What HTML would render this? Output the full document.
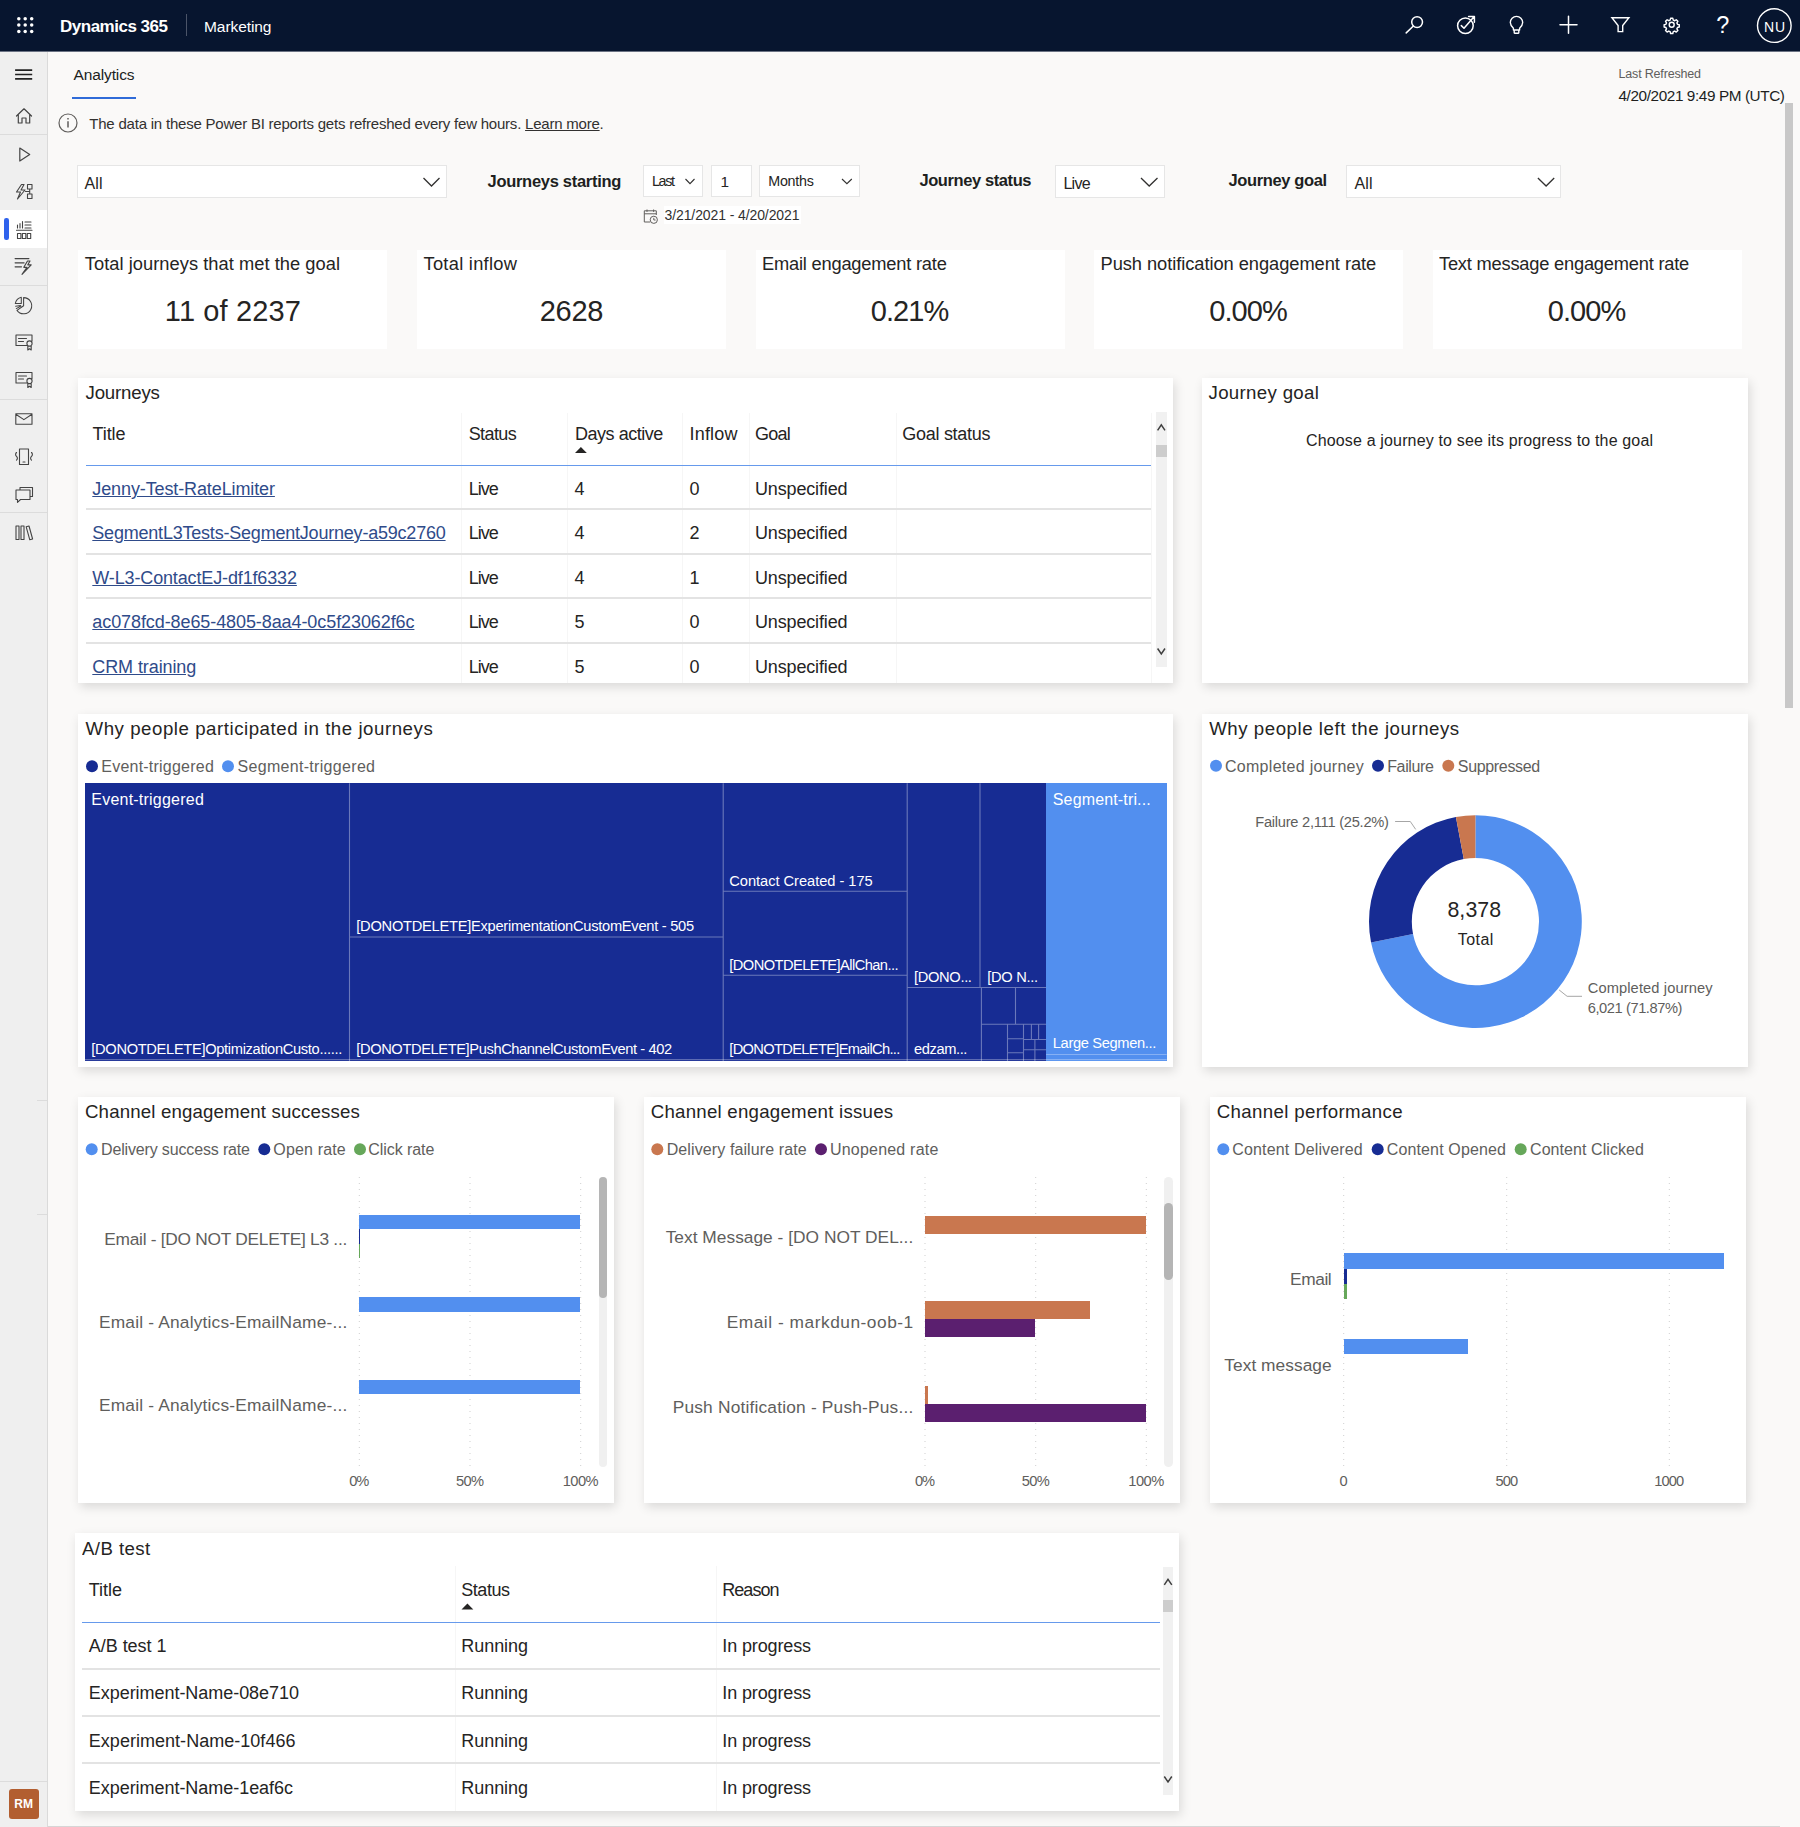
<!DOCTYPE html>
<html lang="en"><head><meta charset="utf-8"><title>Analytics - Dynamics 365 Marketing</title>
<style>
html,body{margin:0;padding:0}
body{width:1800px;height:1827px;position:relative;overflow:hidden;background:#faf9f8;font-family:"Liberation Sans",sans-serif;color:#252423}
.t{position:absolute;white-space:nowrap;line-height:1;margin:0;padding:0;opacity:.999}
.r{position:absolute}
.panel{background:#fff;box-shadow:2px 4px 10px rgba(0,0,0,.13)}
.card{background:#fff}
.box{background:#fff;border:1px solid #e6e6e6;box-sizing:border-box}
svg{position:absolute;left:0;top:0;overflow:visible}
a.t{text-decoration:underline}
section{display:block;margin:0;padding:0}

</style></head>
<body>
<section aria-label="top navigation bar">
<div class="r" style="left:0.0px;top:0.0px;width:1800.0px;height:51.0px;background:#07152f;"></div>
<div class="r" style="left:0.0px;top:51.0px;width:1800.0px;height:1.0px;background:#6b7384;"></div>
<svg width="1800" height="51" fill="#fff"><circle cx="18.8" cy="18.7" r="1.75"/><circle cx="18.8" cy="25.0" r="1.75"/><circle cx="18.8" cy="31.4" r="1.75"/><circle cx="25.2" cy="18.7" r="1.75"/><circle cx="25.2" cy="25.0" r="1.75"/><circle cx="25.2" cy="31.4" r="1.75"/><circle cx="31.7" cy="18.7" r="1.75"/><circle cx="31.7" cy="25.0" r="1.75"/><circle cx="31.7" cy="31.4" r="1.75"/></svg>
<div class="t" style="left:60.0px;top:18px;font-size:17px;letter-spacing:-0.492px;color:#fff;font-weight:700;">Dynamics 365</div>
<div class="r" style="left:185.5px;top:14.0px;width:1.0px;height:22.0px;background:#4b5468;"></div>
<div class="t" style="left:204.0px;top:19px;font-size:15.5px;letter-spacing:-0.070px;color:#fff;">Marketing</div>
<svg width="1800" height="51" fill="none" stroke="#fff" stroke-width="1.5" stroke-linecap="round" stroke-linejoin="round">
<g><circle cx="1417.1" cy="22.1" r="5.4"/><path d="M1413.4 26 L1406.2 32.9"/></g>
<g><circle cx="1465.4" cy="25.8" r="7.8"/><path d="M1461.300 25.6 l2.700 2.700 l10 -11.600 M1468.600 16.400 h5.800 v5.800" /></g>
<g><path d="M1513.4 30 v-1.8 c-2 -1.9 -3.1 -3.6 -3.1 -5.6 a6.2 6.2 0 0 1 12.4 0 c0 2 -1.1 3.7 -3.1 5.6 v1.800 z M1514.2 30 v2.400 a.8 .8 0 0 0 .8 .8 h3 a.8 .8 0 0 0 .8 -.8 v-2.400" stroke-width="1.4"/></g>
<g><path d="M1568.5 16.3 v17 M1560 24.8 h17"/></g>
<g><path d="M1611.900 17.700 h17 l-6.200 7.800 v6.100 h-4.600 v-6.100 z" stroke-width="1.4" stroke-linejoin="miter"/></g>
<g transform="translate(1671.7 24.7) scale(.75) translate(-1671.7 -25)" stroke-width="1.9"><circle cx="1671.7" cy="25" r="3.3"/><path d="M1670.2 16.5 h3 l.6 2.4 l1.9 .8 l2.1 -1.3 l2.1 2.1 l-1.3 2.1 l.8 1.9 l2.4 .6 v3 l-2.4 .6 l-.8 1.9 l1.3 2.1 l-2.1 2.1 l-2.1 -1.3 l-1.9 .8 l-.6 2.4 h-3 l-.6 -2.4 l-1.9 -.8 l-2.1 1.3 l-2.1 -2.1 l1.3 -2.1 l-.8 -1.9 l-2.4 -.6 v-3 l2.4 -.6 l.8 -1.9 l-1.3 -2.1 l2.1 -2.1 l2.1 1.3 l1.9 -.8 z"/></g>
<g><circle cx="1774.3" cy="25.6" r="16.8" stroke-width="1.4"/></g>
</svg>
<div class="t" style="left:1716.3px;top:14px;font-size:23.5px;color:#fff;">?</div>
<div class="t" style="left:1764.0px;top:20px;font-size:14px;letter-spacing:0.779px;color:#fff;">NU</div>
</section>
<section aria-label="left rail">
<div class="r" style="left:0.0px;top:52.0px;width:48.0px;height:1775.0px;background:#efefef;border-right:1px solid #dadada;box-sizing:border-box;"></div>
<div class="r" style="left:0.0px;top:210.0px;width:47.0px;height:38.0px;background:#fff;"></div>
<div class="r" style="left:4.3px;top:217.8px;width:4.5px;height:22.0px;background:#2f62ec;border-radius:2.2px;"></div>
<div class="r" style="left:0.0px;top:134.0px;width:47.0px;height:1.0px;background:#dcdcdc;"></div>
<div class="r" style="left:0.0px;top:285.0px;width:47.0px;height:1.0px;background:#dcdcdc;"></div>
<div class="r" style="left:0.0px;top:399.0px;width:47.0px;height:1.0px;background:#dcdcdc;"></div>
<div class="r" style="left:0.0px;top:512.0px;width:47.0px;height:1.0px;background:#dcdcdc;"></div>
<div class="r" style="left:36.5px;top:1100.0px;width:10.5px;height:1.0px;background:#dcdcdc;"></div>
<div class="r" style="left:36.5px;top:1214.0px;width:10.5px;height:1.0px;background:#dcdcdc;"></div>
<div class="r" style="left:0.0px;top:1781.0px;width:47.0px;height:1.0px;background:#dcdcdc;"></div>
<div class="r" style="left:8.9px;top:1789.3px;width:29.8px;height:29.7px;background:#b25e30;border-radius:3px;"></div>
<div class="t" style="left:14.3px;top:1798px;font-size:12px;letter-spacing:0.137px;color:#fff;font-weight:700;">RM</div>
<svg width="48" height="1827" fill="none" stroke="#444" stroke-width="1.2" stroke-linejoin="round" stroke-linecap="round">
<path d="M15.1 70.2 h17.1 M15.1 74.5 h17.1 M15.1 78.9 h17.1" stroke-width="1.7" stroke-linecap="butt" stroke="#222"/>
<path d="M16.5 116 L24 108.8 L31.5 116 M18.3 114.5 V123 H22 V118 H26 V123 H29.7 V114.5"/>
<path d="M19.8 148 L29.7 154.5 L19.8 161 Z"/>
<path d="M21.5 184.5 L16.5 192 H20.5 L17.5 199 L25 190 H21 L24 184.5 Z M27.5 184.5 h4.5 v4.5 h-4.5 z M27.5 194 h4.5 v4.5 h-4.5 z M29.7 189 v5 M25.5 191.5 h4.2" stroke-width="1.1"/>
<path d="M17.5 233.5 h3.4 v5 h-3.4 z M22.4 233.5 h3.4 v5 h-3.4 z M27.3 233.5 h3.4 v5 h-3.4 z M16.5 230.3 h15.5 M17.5 228 v-3 M20 228 v-4.5 M22.5 228 v-6.5 M25 222 h6 M25 225 h6 M25 228 h6" stroke-width="1.1"/>
<path d="M15.1 258.6 h13.8 M15.1 262.8 h9 M15.1 266.8 h6.4 M27.5 261 L23.8 267.3 H27 L22 274.3 L31.2 264.8 H27.8 L30 261 Z" stroke-width="1.15"/>
<path d="M23.6 297.6 a8.1 8.1 0 1 1 -6.6 12.8 L23.6 305.7 Z M21.3 297.3 v6.2 h-6 a8.1 8.1 0 0 1 6 -6.2 z M15.6 306.2 l5 -.6 M16.3 308.6 l4.6 -2.6" stroke-width="1.05"/>
<path d="M28 345.5 H16 V335 H32 V341 M18.5 338.5 h8 M18.5 341.5 h5 M29.5 343.5 m-2.6 0 a2.6 2.6 0 1 0 5.2 0 a2.6 2.6 0 1 0 -5.2 0 M27.8 346 v4 l1.7 -1.2 l1.7 1.2 v-4" stroke-width="1.1"/>
<path d="M28 383 H16 V372.5 H32 V378.5 M18.5 376 h8 M18.5 379 h5 M29.5 381 m-2.6 0 a2.6 2.6 0 1 0 5.2 0 a2.6 2.6 0 1 0 -5.2 0 M27.8 383.5 v4 l1.7 -1.2 l1.7 1.2 v-4" stroke-width="1.1"/>
<path d="M15.8 413.8 H32 V424.3 H15.8 Z M15.8 414.3 L23.9 419.6 L32 414.3" stroke-width="1.1"/>
<path d="M19.5 449 h9 v15.5 h-9 z M23 462 h2 M16.5 452.5 c-1.2 1.2 -1.2 2.6 0 3.8 c1.2 1.2 1.2 2.6 0 3.8 M31.5 452.5 c1.2 1.2 1.2 2.6 0 3.8 c-1.2 1.2 -1.2 2.6 0 3.8" stroke-width="1.1"/>
<path d="M20 490 v-2.5 h12.5 v9 h-2.5 M16 490 h14 v9.5 h-9.5 l-3 2.8 v-2.8 h-1.5 z" stroke-width="1.1"/>
<path d="M16 526 h3 v13.5 h-3 z M21 526 h3 v13.5 h-3 z M26.2 526.8 l2.8 -.8 l3.6 13 l-2.8 .8 z" stroke-width="1.1"/>
</svg>
</section>
<section aria-label="page heading">
<div class="t" style="left:73.5px;top:67px;font-size:15.5px;letter-spacing:-0.128px;color:#201f1e;">Analytics</div>
<div class="r" style="left:72.0px;top:96.7px;width:64.3px;height:2.2px;background:#2f6bd8;"></div>
<svg width="100" height="140" fill="none" stroke="#605e5c" stroke-width="1.2"><circle cx="68" cy="123" r="9"/><path d="M68 121.3 v6.2 M68 118 v1.4" stroke-width="1.5"/></svg>
<div class="t" style="left:89.3px;top:116px;font-size:15px;letter-spacing:-0.216px;color:#323130">The data in these Power BI reports gets refreshed every few hours. <span style="text-decoration:underline">Learn more</span>.</div>
<div class="t" style="left:1618.5px;top:68px;font-size:12.5px;letter-spacing:-0.175px;color:#605e5c;">Last Refreshed</div>
<div class="t" style="left:1618.5px;top:88px;font-size:15.3px;letter-spacing:-0.395px;color:#201f1e;">4/20/2021 9:49 PM (UTC)</div>
<div class="r" style="left:1784.5px;top:103.0px;width:8.0px;height:605.0px;background:#c8c8c8;"></div>
<div class="r" style="left:48.0px;top:1825.5px;width:1732.0px;height:1.0px;background:#d6d6d6;"></div>
</section>
<section aria-label="filter bar">
<div class="r box" style="left:77.0px;top:165.0px;width:370.0px;height:33.0px;"></div>
<div class="t" style="left:84.5px;top:176px;font-size:16px;letter-spacing:0.109px;">All</div>
<svg width="1800" height="260" fill="none" stroke="#323130" stroke-width="1.3"><path d="M423.5 178.0 L431.5 186.0 L439.5 178.0"/></svg>
<div class="t" style="left:487.5px;top:173px;font-size:16.5px;letter-spacing:-0.291px;color:#201f1e;font-weight:700;">Journeys starting</div>
<div class="r box" style="left:643.0px;top:165.0px;width:60.0px;height:32.0px;"></div>
<div class="t" style="left:652.0px;top:174px;font-size:14.3px;letter-spacing:-1.343px;">Last</div>
<svg width="1800" height="260" fill="none" stroke="#323130" stroke-width="1.1"><path d="M685.5 179.0 L690.0 183.7 L694.5 179.0"/></svg>
<div class="r box" style="left:711.0px;top:165.0px;width:41.0px;height:32.0px;"></div>
<div class="t" style="left:720.5px;top:174px;font-size:15.3px;">1</div>
<div class="r box" style="left:759.0px;top:165.0px;width:101.0px;height:32.0px;"></div>
<div class="t" style="left:768.3px;top:174px;font-size:14.3px;letter-spacing:-0.279px;">Months</div>
<svg width="1800" height="260" fill="none" stroke="#323130" stroke-width="1.1"><path d="M842.0 179.0 L846.9 183.7 L851.8 179.0"/></svg>
<div class="r" style="left:663.8px;top:205.5px;width:137.5px;height:18.5px;background:#fff;"></div>
<svg width="1800" height="260" fill="none" stroke="#605e5c" stroke-width="1"><path d="M650 222 H644.3 V210.8 H656.3 V215 M644.3 213.8 H656.3 M647 209.5 v2.4 M653.6 209.5 v2.4"/><circle cx="653.8" cy="219.8" r="3.6" fill="#faf9f8"/><path d="M653.8 217.8 v2.2 h1.8"/></svg>
<div class="t" style="left:664.5px;top:208px;font-size:14px;letter-spacing:-0.100px;color:#323130;">3/21/2021 - 4/20/2021</div>
<div class="t" style="left:919.4px;top:172px;font-size:16.5px;letter-spacing:-0.406px;color:#201f1e;font-weight:700;">Journey status</div>
<div class="r box" style="left:1055.0px;top:165.0px;width:110.0px;height:33.0px;"></div>
<div class="t" style="left:1063.4px;top:176px;font-size:16px;letter-spacing:-0.718px;">Live</div>
<svg width="1800" height="260" fill="none" stroke="#323130" stroke-width="1.3"><path d="M1141.0 178.0 L1149.2 186.0 L1157.5 178.0"/></svg>
<div class="t" style="left:1228.5px;top:172px;font-size:16.5px;letter-spacing:-0.363px;color:#201f1e;font-weight:700;">Journey goal</div>
<div class="r box" style="left:1346.0px;top:165.0px;width:215.0px;height:33.0px;"></div>
<div class="t" style="left:1354.5px;top:176px;font-size:16px;letter-spacing:0.109px;">All</div>
<svg width="1800" height="260" fill="none" stroke="#323130" stroke-width="1.3"><path d="M1537.9 178.0 L1546.1 186.0 L1554.2 178.0"/></svg>
</section>
<section aria-label="KPI cards">
<div class="r card" style="left:78.3px;top:250.0px;width:309.0px;height:98.7px;"></div>
<div class="t" style="left:84.8px;top:255px;font-size:18.3px;letter-spacing:0.038px;">Total journeys that met the goal</div>
<div class="t" style="left:164.8px;top:297px;font-size:29px;letter-spacing:0.120px;">11 of 2237</div>
<div class="r card" style="left:417.0px;top:250.0px;width:309.0px;height:98.7px;"></div>
<div class="t" style="left:423.5px;top:255px;font-size:18.3px;letter-spacing:0.270px;">Total inflow</div>
<div class="t" style="left:539.8px;top:297px;font-size:29px;letter-spacing:-0.339px;">2628</div>
<div class="r card" style="left:755.5px;top:250.0px;width:309.0px;height:98.7px;"></div>
<div class="t" style="left:762.0px;top:255px;font-size:18.3px;letter-spacing:-0.211px;">Email engagement rate</div>
<div class="t" style="left:870.8px;top:297px;font-size:29px;letter-spacing:-0.932px;">0.21%</div>
<div class="r card" style="left:1094.0px;top:250.0px;width:309.0px;height:98.7px;"></div>
<div class="t" style="left:1100.5px;top:255px;font-size:18.3px;letter-spacing:-0.054px;">Push notification engagement rate</div>
<div class="t" style="left:1209.2px;top:297px;font-size:29px;letter-spacing:-0.932px;">0.00%</div>
<div class="r card" style="left:1432.5px;top:250.0px;width:309.0px;height:98.7px;"></div>
<div class="t" style="left:1439.0px;top:255px;font-size:18.3px;letter-spacing:-0.217px;">Text message engagement rate</div>
<div class="t" style="left:1547.8px;top:297px;font-size:29px;letter-spacing:-0.932px;">0.00%</div>
</section>
<section aria-label="Journeys table">
<div class="r panel" style="left:78.3px;top:378.3px;width:1094.4px;height:305.0px;"></div>
<div class="t" style="left:85.5px;top:384px;font-size:18.67px;letter-spacing:-0.180px;">Journeys</div>
<div class="r" style="left:460.8px;top:412.5px;width:1.0px;height:270.5px;background:#f6f6f6;"></div>
<div class="r" style="left:567.0px;top:412.5px;width:1.0px;height:270.5px;background:#f6f6f6;"></div>
<div class="r" style="left:682.0px;top:412.5px;width:1.0px;height:270.5px;background:#f6f6f6;"></div>
<div class="r" style="left:748.8px;top:412.5px;width:1.0px;height:270.5px;background:#f6f6f6;"></div>
<div class="r" style="left:896.3px;top:412.5px;width:1.0px;height:270.5px;background:#f6f6f6;"></div>
<div class="r" style="left:1150.5px;top:412.5px;width:1.0px;height:270.5px;background:#f6f6f6;"></div>
<div class="t" style="left:92.5px;top:425px;font-size:18px;letter-spacing:-0.084px;">Title</div>
<div class="t" style="left:468.7px;top:425px;font-size:18px;letter-spacing:-0.586px;">Status</div>
<div class="t" style="left:575.0px;top:425px;font-size:18px;letter-spacing:-0.473px;">Days active</div>
<div class="t" style="left:689.5px;top:425px;font-size:18px;letter-spacing:0.196px;">Inflow</div>
<div class="t" style="left:755.0px;top:425px;font-size:18px;letter-spacing:-0.741px;">Goal</div>
<div class="t" style="left:902.3px;top:425px;font-size:18px;letter-spacing:-0.285px;">Goal status</div>
<svg width="1800" height="1827"><path d="M575 453 L580.9 447 L586.8 453 Z" fill="#252423"/></svg>
<div class="r" style="left:85.8px;top:465.0px;width:1064.8px;height:1.3px;background:#669aec;"></div>
<a class="t" style="left:92.3px;top:480px;font-size:18px;letter-spacing:-0.113px;color:#2f4b8a;">Jenny-Test-RateLimiter</a>
<div class="t" style="left:468.7px;top:480px;font-size:18px;letter-spacing:-0.974px;">Live</div>
<div class="t" style="left:574.5px;top:480px;font-size:18px;">4</div>
<div class="t" style="left:689.5px;top:480px;font-size:18px;">0</div>
<div class="t" style="left:755.0px;top:480px;font-size:18px;letter-spacing:-0.155px;">Unspecified</div>
<div class="r" style="left:85.8px;top:508.3px;width:1065.2px;height:2.0px;background:#e3e3e3;"></div>
<a class="t" style="left:92.3px;top:524px;font-size:18px;letter-spacing:-0.209px;color:#2f4b8a;">SegmentL3Tests-SegmentJourney-a59c2760</a>
<div class="t" style="left:468.7px;top:524px;font-size:18px;letter-spacing:-0.974px;">Live</div>
<div class="t" style="left:574.5px;top:524px;font-size:18px;">4</div>
<div class="t" style="left:689.5px;top:524px;font-size:18px;">2</div>
<div class="t" style="left:755.0px;top:524px;font-size:18px;letter-spacing:-0.155px;">Unspecified</div>
<div class="r" style="left:85.8px;top:552.8px;width:1065.2px;height:2.0px;background:#e3e3e3;"></div>
<a class="t" style="left:92.3px;top:569px;font-size:18px;letter-spacing:-0.140px;color:#2f4b8a;">W-L3-ContactEJ-df1f6332</a>
<div class="t" style="left:468.7px;top:569px;font-size:18px;letter-spacing:-0.974px;">Live</div>
<div class="t" style="left:574.5px;top:569px;font-size:18px;">4</div>
<div class="t" style="left:689.5px;top:569px;font-size:18px;">1</div>
<div class="t" style="left:755.0px;top:569px;font-size:18px;letter-spacing:-0.155px;">Unspecified</div>
<div class="r" style="left:85.8px;top:597.3px;width:1065.2px;height:2.0px;background:#e3e3e3;"></div>
<a class="t" style="left:92.3px;top:613px;font-size:18px;letter-spacing:-0.087px;color:#2f4b8a;">ac078fcd-8e65-4805-8aa4-0c5f23062f6c</a>
<div class="t" style="left:468.7px;top:613px;font-size:18px;letter-spacing:-0.974px;">Live</div>
<div class="t" style="left:574.5px;top:613px;font-size:18px;">5</div>
<div class="t" style="left:689.5px;top:613px;font-size:18px;">0</div>
<div class="t" style="left:755.0px;top:613px;font-size:18px;letter-spacing:-0.155px;">Unspecified</div>
<div class="r" style="left:85.8px;top:641.8px;width:1065.2px;height:2.0px;background:#e3e3e3;"></div>
<a class="t" style="left:92.3px;top:658px;font-size:18px;letter-spacing:-0.094px;color:#2f4b8a;">CRM training</a>
<div class="t" style="left:468.7px;top:658px;font-size:18px;letter-spacing:-0.974px;">Live</div>
<div class="t" style="left:574.5px;top:658px;font-size:18px;">5</div>
<div class="t" style="left:689.5px;top:658px;font-size:18px;">0</div>
<div class="t" style="left:755.0px;top:658px;font-size:18px;letter-spacing:-0.155px;">Unspecified</div>
<div class="r" style="left:1155.8px;top:412.0px;width:11.0px;height:255.0px;background:#f1f1f1;"></div>
<div class="r" style="left:1155.8px;top:445.3px;width:11.0px;height:12.2px;background:#cdcdcd;"></div>
<svg width="1800" height="1827" fill="none" stroke="#404040" stroke-width="1.5"><path d="M1157.6 430.4 L1161.3 424.9 L1165.0 430.4 M1157.6 648.5 L1161.3 654.0 L1165.0 648.5"/></svg>
</section>
<section aria-label="Journey goal">
<div class="r panel" style="left:1202.0px;top:378.3px;width:546.2px;height:305.0px;"></div>
<div class="t" style="left:1208.5px;top:384px;font-size:18.67px;letter-spacing:0.326px;">Journey goal</div>
<div class="t" style="left:1306.0px;top:433px;font-size:16px;letter-spacing:0.154px;">Choose a journey to see its progress to the goal</div>
</section>
<section aria-label="Why people participated (treemap)">
<div class="r panel" style="left:78.3px;top:714.2px;width:1094.4px;height:353.1px;"></div>
<div class="t" style="left:85.5px;top:720px;font-size:18.67px;letter-spacing:0.541px;">Why people participated in the journeys</div>
<div class="t" style="left:101.3px;top:759px;font-size:16px;letter-spacing:0.222px;color:#605e5c;">Event-triggered</div>
<div class="t" style="left:237.5px;top:759px;font-size:16px;letter-spacing:0.311px;color:#605e5c;">Segment-triggered</div>
<svg width="1800" height="1827"><circle cx="92.0" cy="766.2" r="6" fill="#172c93"/><circle cx="228.0" cy="766.2" r="6" fill="#528fef"/></svg>
<div class="r" style="left:84.5px;top:783.3px;width:961.6px;height:277.7px;background:#172c93;"></div>
<div class="r" style="left:1046.1px;top:783.3px;width:120.6px;height:277.7px;background:#528fef;"></div>
<svg width="1800" height="1827" fill="none" stroke="rgba(255,255,255,.36)" stroke-width="1.1"><path d="M349.5 783.3 V1061.0 M723.2 783.3 V1061.0 M907.2 783.3 V1061.0 M980.0 783.3 V987.5 M981.4 987.5 V1061.0 M349.5 937.0 H723.2 M723.2 891.3 H907.2 M723.2 975.3 H907.2 M907.2 987.5 H1046.1 M1015.5 987.5 V1024.3 M981.4 1024.3 H1046.1 M1007.5 1024.3 V1061.0 M1023.5 1024.3 V1061.0 M1007.5 1038.8 H1023.5 M1023.5 1039.5 H1046.1 M1031.4 1024.3 V1039.5 M1038.6 1024.3 V1039.5 M1007.5 1052.8 H1023.5 M1034.9 1039.5 V1061.0 M1023.5 1049.8 H1046.1"/><path d="M1046.1 1054.5 H1166.7 M84.5 1059.6 H1166.7" stroke="rgba(255,255,255,.3)"/></svg>
<div class="t" style="left:91.3px;top:792px;font-size:16px;letter-spacing:0.222px;color:#fff;">Event-triggered</div>
<div class="t" style="left:91.3px;top:1042px;font-size:14.67px;letter-spacing:-0.323px;color:#fff;">[DONOTDELETE]OptimizationCusto......</div>
<div class="t" style="left:356.3px;top:919px;font-size:14.67px;letter-spacing:-0.263px;color:#fff;">[DONOTDELETE]ExperimentationCustomEvent - 505</div>
<div class="t" style="left:356.3px;top:1042px;font-size:14.67px;letter-spacing:-0.391px;color:#fff;">[DONOTDELETE]PushChannelCustomEvent - 402</div>
<div class="t" style="left:729.3px;top:874px;font-size:14.67px;letter-spacing:-0.042px;color:#fff;">Contact Created - 175</div>
<div class="t" style="left:729.3px;top:958px;font-size:14.67px;letter-spacing:-0.563px;color:#fff;">[DONOTDELETE]AllChan...</div>
<div class="t" style="left:729.3px;top:1042px;font-size:14.67px;letter-spacing:-0.666px;color:#fff;">[DONOTDELETE]EmailCh...</div>
<div class="t" style="left:914.1px;top:970px;font-size:14.67px;letter-spacing:-0.345px;color:#fff;">[DONO...</div>
<div class="t" style="left:914.1px;top:1042px;font-size:14.67px;letter-spacing:-0.408px;color:#fff;">edzam...</div>
<div class="t" style="left:987.2px;top:970px;font-size:14.67px;letter-spacing:-0.297px;color:#fff;">[DO N...</div>
<div class="t" style="left:1052.8px;top:792px;font-size:16px;letter-spacing:0.144px;color:#fff;">Segment-tri...</div>
<div class="t" style="left:1052.8px;top:1036px;font-size:14.67px;letter-spacing:-0.340px;color:#fff;">Large Segmen...</div>
</section>
<section aria-label="Why people left (donut)">
<div class="r panel" style="left:1202.0px;top:714.2px;width:546.2px;height:353.1px;"></div>
<div class="t" style="left:1209.2px;top:720px;font-size:18.67px;letter-spacing:0.541px;">Why people left the journeys</div>
<div class="t" style="left:1225.0px;top:759px;font-size:16px;letter-spacing:0.281px;color:#605e5c;">Completed journey</div>
<div class="t" style="left:1387.2px;top:759px;font-size:16px;letter-spacing:-0.351px;color:#605e5c;">Failure</div>
<div class="t" style="left:1457.8px;top:759px;font-size:16px;letter-spacing:-0.333px;color:#605e5c;">Suppressed</div>
<svg width="1800" height="1827"><circle cx="1216.0" cy="765.8" r="6" fill="#528fef"/><circle cx="1378.0" cy="765.8" r="6" fill="#172c93"/><circle cx="1448.3" cy="765.8" r="6" fill="#c9774f"/></svg>
<svg width="1800" height="1827"><path d="M1475.40 815.20 A106.4 106.4 0 1 1 1371.05 942.39 L1413.03 934.03 A63.6 63.6 0 1 0 1475.40 858.00 Z" fill="#528fef"/><path d="M1371.05 942.39 A106.4 106.4 0 0 1 1455.92 817.00 L1463.76 859.07 A63.6 63.6 0 0 0 1413.03 934.03 Z" fill="#172c93"/><path d="M1455.92 817.00 A106.4 106.4 0 0 1 1475.40 815.20 L1475.40 858.00 A63.6 63.6 0 0 0 1463.76 859.07 Z" fill="#c9774f"/><path d="M1395.1 821.5 H1410.3 L1415.7 829.4 M1559.2 990 L1567.1 996.3 H1582" fill="none" stroke="#a6a6a6" stroke-width="1"/></svg>
<div class="t" style="left:1447.4px;top:900px;font-size:21.33px;letter-spacing:0.105px;">8,378</div>
<div class="t" style="left:1457.8px;top:932px;font-size:16px;letter-spacing:0.426px;">Total</div>
<div class="t" style="left:1255.2px;top:815px;font-size:14.67px;letter-spacing:-0.250px;color:#605e5c;">Failure 2,111 (25.2%)</div>
<div class="t" style="left:1587.7px;top:981px;font-size:14.67px;letter-spacing:0.116px;color:#605e5c;">Completed journey</div>
<div class="t" style="left:1587.7px;top:1001px;font-size:14.67px;letter-spacing:-0.416px;color:#605e5c;">6,021 (71.87%)</div>
</section>
<section aria-label="Channel engagement successes">
<div class="r panel" style="left:78.3px;top:1097.3px;width:536.0px;height:406.0px;"></div>
<div class="t" style="left:85.0px;top:1103px;font-size:18.67px;letter-spacing:0.152px;">Channel engagement successes</div>
<div class="t" style="left:101.0px;top:1142px;font-size:16px;letter-spacing:-0.153px;color:#605e5c;">Delivery success rate</div>
<div class="t" style="left:273.3px;top:1142px;font-size:16px;letter-spacing:0.155px;color:#605e5c;">Open rate</div>
<div class="t" style="left:368.3px;top:1142px;font-size:16px;letter-spacing:-0.076px;color:#605e5c;">Click rate</div>
<svg width="1800" height="1827"><circle cx="91.7" cy="1149.3" r="6" fill="#528fef"/><circle cx="264.3" cy="1149.3" r="6" fill="#172c93"/><circle cx="360.0" cy="1149.3" r="6" fill="#66a75a"/></svg>
<svg width="1800" height="1827" fill="none" stroke="#cfcfcf" stroke-width="1" stroke-dasharray="1 5"><path d="M359.3 1177 V1467 M470.0 1177 V1467 M580.7 1177 V1467"/></svg>
<div class="r" style="left:359.3px;top:1215.0px;width:221.0px;height:14.4px;background:#528fef;"></div>
<div class="r" style="left:359.3px;top:1297.3px;width:221.0px;height:14.4px;background:#528fef;"></div>
<div class="r" style="left:359.3px;top:1380.0px;width:221.0px;height:14.4px;background:#528fef;"></div>
<div class="r" style="left:359.3px;top:1229.4px;width:1.0px;height:14.4px;background:#172c93;"></div>
<div class="r" style="left:359.3px;top:1243.8px;width:1.0px;height:14.2px;background:#66a75a;"></div>
<div class="t" style="left:104.3px;top:1231px;font-size:17.33px;letter-spacing:-0.277px;color:#605e5c;">Email - [DO NOT DELETE] L3 ...</div>
<div class="t" style="left:99.0px;top:1314px;font-size:17.33px;letter-spacing:0.187px;color:#605e5c;">Email - Analytics-EmailName-...</div>
<div class="t" style="left:99.0px;top:1397px;font-size:17.33px;letter-spacing:0.187px;color:#605e5c;">Email - Analytics-EmailName-...</div>
<div class="t" style="left:349.3px;top:1474px;font-size:14.67px;letter-spacing:-1.203px;color:#605e5c;">0%</div>
<div class="t" style="left:456.0px;top:1474px;font-size:14.67px;letter-spacing:-0.681px;color:#605e5c;">50%</div>
<div class="t" style="left:562.7px;top:1474px;font-size:14.67px;letter-spacing:-0.507px;color:#605e5c;">100%</div>
<div class="r" style="left:599.0px;top:1176.7px;width:8.3px;height:290.6px;background:#f0f0f0;border-radius:5px;"></div>
<div class="r" style="left:599.0px;top:1176.7px;width:8.3px;height:121.0px;background:#b5b5b5;border-radius:5px;"></div>
</section>
<section aria-label="Channel engagement issues">
<div class="r panel" style="left:644.0px;top:1097.3px;width:536.0px;height:406.0px;"></div>
<div class="t" style="left:650.7px;top:1103px;font-size:18.67px;letter-spacing:0.248px;">Channel engagement issues</div>
<div class="t" style="left:666.7px;top:1142px;font-size:16px;letter-spacing:0.108px;color:#605e5c;">Delivery failure rate</div>
<div class="t" style="left:830.0px;top:1142px;font-size:16px;letter-spacing:0.203px;color:#605e5c;">Unopened rate</div>
<svg width="1800" height="1827"><circle cx="657.3" cy="1149.3" r="6" fill="#c9774f"/><circle cx="821.0" cy="1149.3" r="6" fill="#5b1f6f"/></svg>
<svg width="1800" height="1827" fill="none" stroke="#cfcfcf" stroke-width="1" stroke-dasharray="1 5"><path d="M925.0 1177 V1467 M1035.7 1177 V1467 M1146.3 1177 V1467"/></svg>
<div class="r" style="left:925.0px;top:1215.7px;width:221.0px;height:18.3px;background:#c9774f;"></div>
<div class="r" style="left:925.0px;top:1300.7px;width:165.3px;height:18.3px;background:#c9774f;"></div>
<div class="r" style="left:925.0px;top:1319.0px;width:110.0px;height:18.3px;background:#5b1f6f;"></div>
<div class="r" style="left:925.0px;top:1385.7px;width:3.0px;height:18.3px;background:#c9774f;"></div>
<div class="r" style="left:925.0px;top:1404.0px;width:221.0px;height:18.3px;background:#5b1f6f;"></div>
<div class="t" style="left:665.7px;top:1229px;font-size:17.33px;letter-spacing:0.015px;color:#605e5c;">Text Message - [DO NOT DEL...</div>
<div class="t" style="left:726.7px;top:1314px;font-size:17.33px;letter-spacing:0.517px;color:#605e5c;">Email - markdun-oob-1</div>
<div class="t" style="left:672.7px;top:1399px;font-size:17.33px;letter-spacing:0.186px;color:#605e5c;">Push Notification - Push-Pus...</div>
<div class="t" style="left:915.0px;top:1474px;font-size:14.67px;letter-spacing:-1.203px;color:#605e5c;">0%</div>
<div class="t" style="left:1021.7px;top:1474px;font-size:14.67px;letter-spacing:-0.681px;color:#605e5c;">50%</div>
<div class="t" style="left:1128.3px;top:1474px;font-size:14.67px;letter-spacing:-0.507px;color:#605e5c;">100%</div>
<div class="r" style="left:1164.3px;top:1176.7px;width:9.0px;height:290.6px;background:#f0f0f0;border-radius:5px;"></div>
<div class="r" style="left:1164.3px;top:1203.3px;width:9.0px;height:76.7px;background:#b5b5b5;border-radius:5px;"></div>
</section>
<section aria-label="Channel performance">
<div class="r panel" style="left:1210.0px;top:1097.3px;width:536.0px;height:406.0px;"></div>
<div class="t" style="left:1216.7px;top:1103px;font-size:18.67px;letter-spacing:0.358px;">Channel performance</div>
<div class="t" style="left:1232.3px;top:1142px;font-size:16px;letter-spacing:0.145px;color:#605e5c;">Content Delivered</div>
<div class="t" style="left:1386.7px;top:1142px;font-size:16px;letter-spacing:0.144px;color:#605e5c;">Content Opened</div>
<div class="t" style="left:1530.0px;top:1142px;font-size:16px;letter-spacing:0.075px;color:#605e5c;">Content Clicked</div>
<svg width="1800" height="1827"><circle cx="1223.3" cy="1149.3" r="6" fill="#528fef"/><circle cx="1377.7" cy="1149.3" r="6" fill="#172c93"/><circle cx="1520.7" cy="1149.3" r="6" fill="#66a75a"/></svg>
<svg width="1800" height="1827" fill="none" stroke="#cfcfcf" stroke-width="1" stroke-dasharray="1 5"><path d="M1343.7 1177 V1467 M1506.7 1177 V1467 M1669.3 1177 V1467"/></svg>
<div class="r" style="left:1343.7px;top:1253.3px;width:380.0px;height:15.4px;background:#528fef;"></div>
<div class="r" style="left:1343.7px;top:1268.7px;width:3.0px;height:15.3px;background:#172c93;"></div>
<div class="r" style="left:1343.7px;top:1284.0px;width:3.0px;height:15.3px;background:#66a75a;"></div>
<div class="r" style="left:1343.7px;top:1339.3px;width:124.0px;height:15.0px;background:#528fef;"></div>
<div class="t" style="left:1290.0px;top:1271px;font-size:17.33px;letter-spacing:-0.409px;color:#605e5c;">Email</div>
<div class="t" style="left:1224.3px;top:1357px;font-size:17.33px;letter-spacing:0.044px;color:#605e5c;">Text message</div>
<div class="t" style="left:1339.6px;top:1474px;font-size:14.67px;color:#605e5c;">0</div>
<div class="t" style="left:1495.4px;top:1474px;font-size:14.67px;letter-spacing:-0.889px;color:#605e5c;">500</div>
<div class="t" style="left:1654.3px;top:1474px;font-size:14.67px;letter-spacing:-0.879px;color:#605e5c;">1000</div>
</section>
<section aria-label="A/B test table">
<div class="r panel" style="left:75.2px;top:1532.8px;width:1104.3px;height:278.2px;"></div>
<div class="t" style="left:82.0px;top:1540px;font-size:18.67px;letter-spacing:0.418px;">A/B test</div>
<div class="r" style="left:454.5px;top:1566.0px;width:1.0px;height:245.0px;background:#f6f6f6;"></div>
<div class="r" style="left:715.5px;top:1566.0px;width:1.0px;height:245.0px;background:#f6f6f6;"></div>
<div class="t" style="left:88.8px;top:1581px;font-size:18px;letter-spacing:-0.034px;">Title</div>
<div class="t" style="left:461.3px;top:1581px;font-size:18px;letter-spacing:-0.466px;">Status</div>
<div class="t" style="left:722.3px;top:1581px;font-size:18px;letter-spacing:-0.969px;">Reason</div>
<svg width="1800" height="1827"><path d="M461.5 1609.5 L467.4 1603.5 L473.3 1609.5 Z" fill="#252423"/></svg>
<div class="r" style="left:82.0px;top:1622.0px;width:1078.0px;height:1.3px;background:#669aec;"></div>
<div class="t" style="left:88.8px;top:1637px;font-size:18px;letter-spacing:-0.038px;">A/B test 1</div>
<div class="t" style="left:461.3px;top:1637px;font-size:18px;letter-spacing:-0.059px;">Running</div>
<div class="t" style="left:722.3px;top:1637px;font-size:18px;letter-spacing:-0.135px;">In progress</div>
<div class="r" style="left:82.0px;top:1667.8px;width:1078.0px;height:2.0px;background:#e3e3e3;"></div>
<div class="t" style="left:88.8px;top:1684px;font-size:18px;letter-spacing:-0.043px;">Experiment-Name-08e710</div>
<div class="t" style="left:461.3px;top:1684px;font-size:18px;letter-spacing:-0.059px;">Running</div>
<div class="t" style="left:722.3px;top:1684px;font-size:18px;letter-spacing:-0.135px;">In progress</div>
<div class="r" style="left:82.0px;top:1714.9px;width:1078.0px;height:2.0px;background:#e3e3e3;"></div>
<div class="t" style="left:88.8px;top:1732px;font-size:18px;letter-spacing:0.028px;">Experiment-Name-10f466</div>
<div class="t" style="left:461.3px;top:1732px;font-size:18px;letter-spacing:-0.059px;">Running</div>
<div class="t" style="left:722.3px;top:1732px;font-size:18px;letter-spacing:-0.135px;">In progress</div>
<div class="r" style="left:82.0px;top:1762.0px;width:1078.0px;height:2.0px;background:#e3e3e3;"></div>
<div class="t" style="left:88.8px;top:1779px;font-size:18px;letter-spacing:-0.042px;">Experiment-Name-1eaf6c</div>
<div class="t" style="left:461.3px;top:1779px;font-size:18px;letter-spacing:-0.059px;">Running</div>
<div class="t" style="left:722.3px;top:1779px;font-size:18px;letter-spacing:-0.135px;">In progress</div>
<div class="r" style="left:1162.6px;top:1566.5px;width:10.9px;height:228.5px;background:#f1f1f1;"></div>
<div class="r" style="left:1162.6px;top:1600.3px;width:10.9px;height:12.2px;background:#cdcdcd;"></div>
<svg width="1800" height="1827" fill="none" stroke="#404040" stroke-width="1.5"><path d="M1164.3 1584.9 L1168.0 1579.4 L1171.8 1584.9 M1164.3 1776.5 L1168.0 1782.0 L1171.8 1776.5"/></svg>
</section>
</body></html>
